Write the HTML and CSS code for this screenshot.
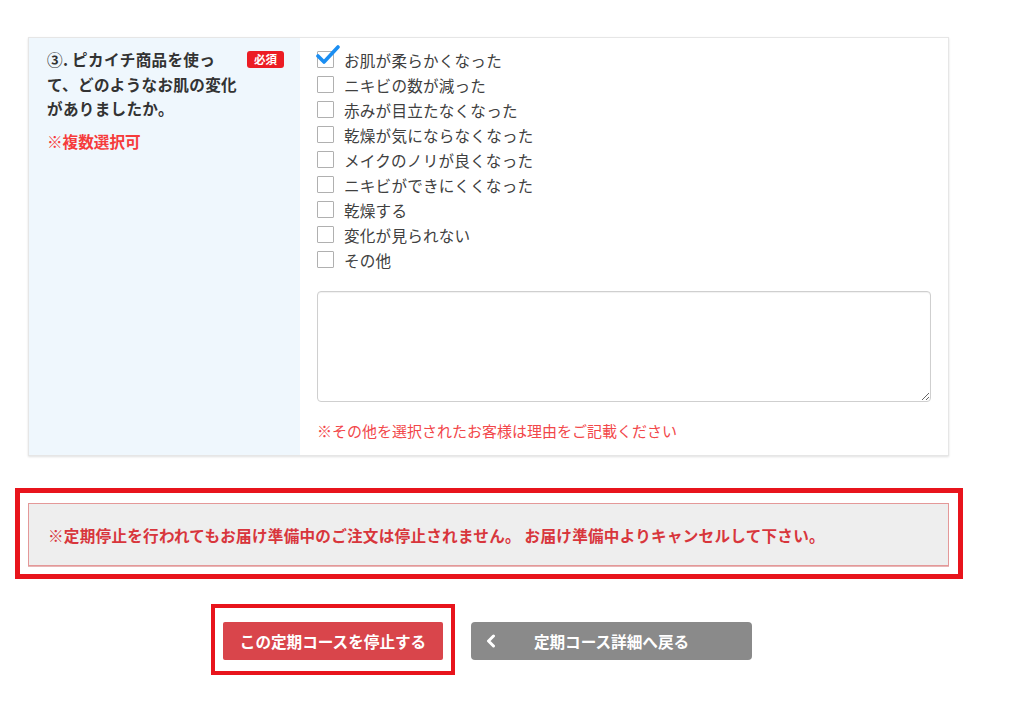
FILE: index.html
```html
<!DOCTYPE html>
<html lang="ja">
<head>
<meta charset="utf-8">
<title>定期コース停止</title>
<link rel="stylesheet" href="styles.css">
</head>
<body>
<main class="page">
  <section class="qa">
    <div class="qa-head">
      <div class="qa-title">
        <p class="qa-question">③. ピカイチ商品を使っ<br>て、どのようなお肌の変化<br>がありましたか。</p>
        <span class="badge">必須</span>
      </div>
      <p class="qa-hint">※複数選択可</p>
    </div>
    <div class="qa-body">
      <ul class="choices">
        <li class="choice is-checked">
          <span class="box">
            <svg class="tick" width="24" height="22" viewBox="0 0 24 22"><polyline points="2,12 8,18 22,3" fill="none" stroke="#1b8ef2" stroke-width="3.6" stroke-linecap="round" stroke-linejoin="round"/></svg>
          </span>お肌が柔らかくなった</li>
        <li class="choice"><span class="box"></span>ニキビの数が減った</li>
        <li class="choice"><span class="box"></span>赤みが目立たなくなった</li>
        <li class="choice"><span class="box"></span>乾燥が気にならなくなった</li>
        <li class="choice"><span class="box"></span>メイクのノリが良くなった</li>
        <li class="choice"><span class="box"></span>ニキビができにくくなった</li>
        <li class="choice"><span class="box"></span>乾燥する</li>
        <li class="choice"><span class="box"></span>変化が見られない</li>
        <li class="choice"><span class="box"></span>その他</li>
      </ul>
      <textarea class="reason"></textarea>
      <p class="reason-note">※その他を選択されたお客様は理由をご記載ください</p>
    </div>
  </section>

  <div class="notice-frame">
    <div class="notice">※定期停止を行われてもお届け準備中のご注文は停止されません。 お届け準備中よりキャンセルして下さい。</div>
  </div>

  <div class="actions">
    <div class="stop-frame">
      <button class="btn btn-stop" type="button">この定期コースを停止する</button>
    </div>
    <button class="btn btn-back" type="button">
      <svg class="chev" width="10" height="14" viewBox="0 0 10 14"><polyline points="7.5,2 2.5,7 7.5,12" fill="none" stroke="#fff" stroke-width="3" stroke-linecap="round" stroke-linejoin="round"/></svg>
      定期コース詳細へ戻る
    </button>
  </div>
</main>
</body>
</html>
```

FILE: styles.css
```css
* {
  box-sizing: border-box;
}

html, body {
  margin: 0;
  padding: 0;
  background: #fff;
}

body {
  font-family: "Noto Sans CJK JP", "Noto Sans", sans-serif;
  color: #3a3a3a;
}

.page {
  padding-top: 37px;
}

/* question row */
.qa {
  display: flex;
  width: 921px;
  margin-left: 28px;
  border: 1px solid #e6e6e6;
  box-shadow: 0 1px 2px rgba(0, 0, 0, 0.12);
}

.qa-head {
  width: 271px;
  flex: none;
  background: #eff7fd;
  padding: 9px 16px 0 18px;
}

.qa-title {
  display: flex;
  justify-content: space-between;
  align-items: flex-start;
}

.qa-question {
  margin: 0;
  font-size: 15.6px;
  font-weight: bold;
  letter-spacing: 0.3px;
  line-height: 24.5px;
  color: #333;
}

.badge {
  margin-top: 4px;
  width: 37px;
  height: 17px;
  border-radius: 3px;
  background: #ec1c24;
  color: #fff;
  font-size: 11.5px;
  font-weight: bold;
  line-height: 17px;
  text-align: center;
}

.qa-hint {
  margin: 10px 0 0;
  font-size: 15.6px;
  font-weight: bold;
  line-height: 20px;
  color: #f63b3b;
}

.qa-body {
  flex: 1;
  background: #fff;
  padding: 9px 17px 14px 17px;
}

.choices {
  list-style: none;
  margin: 0;
  padding: 0;
}

.choice {
  display: flex;
  align-items: center;
  gap: 10px;
  height: 25px;
  font-size: 15.6px;
  letter-spacing: 0.2px;
  color: #404040;
}

.box {
  position: relative;
  width: 17px;
  height: 17px;
  flex: none;
  border: 1px solid #b0b0b0;
  border-radius: 1px;
  background: #fff;
}

.tick {
  position: absolute;
  left: -2px;
  top: -8px;
}

.reason {
  display: block;
  width: 100%;
  height: 111px;
  margin: 19px 0 0;
  border: 1px solid #cfcfcf;
  border-radius: 4px;
  box-shadow: inset 0 1px 1px rgba(0, 0, 0, 0.06);
  font-family: inherit;
}

.reason-note {
  margin: 19px 0 0;
  font-size: 15px;
  line-height: 20px;
  color: #f2474a;
}

/* warning box */
.notice-frame {
  width: 948px;
  margin: 32px 0 0 15px;
  border: 5px solid #e8141c;
  padding: 10px 9px 8px 8px;
}

.notice {
  display: flex;
  align-items: center;
  height: 63px;
  padding-left: 19px;
  background: #eeeeee;
  border: 1px solid #e49898;
  box-shadow: 0 1px 0 #e7b5b5;
  font-size: 15.6px;
  font-weight: bold;
  letter-spacing: 0.25px;
  color: #d8363c;
}

/* buttons */
.actions {
  display: flex;
  align-items: flex-start;
  gap: 16px;
  margin-top: 25px;
  padding-left: 211px;
}

.stop-frame {
  border: 4px solid #e8141c;
  padding: 14px 8px 11px 8px;
}

.btn {
  height: 38px;
  border: 0;
  color: #fff;
  font-family: inherit;
  font-size: 15.6px;
  font-weight: bold;
  cursor: pointer;
}

.btn-stop {
  display: block;
  width: 220px;
  background: #d9454b;
  border-radius: 2px;
}

.btn-back {
  position: relative;
  width: 281px;
  margin-top: 18px;
  background: #8a8a8a;
  border-radius: 4px;
}

.chev {
  position: absolute;
  left: 15px;
  top: 12px;
}
```
